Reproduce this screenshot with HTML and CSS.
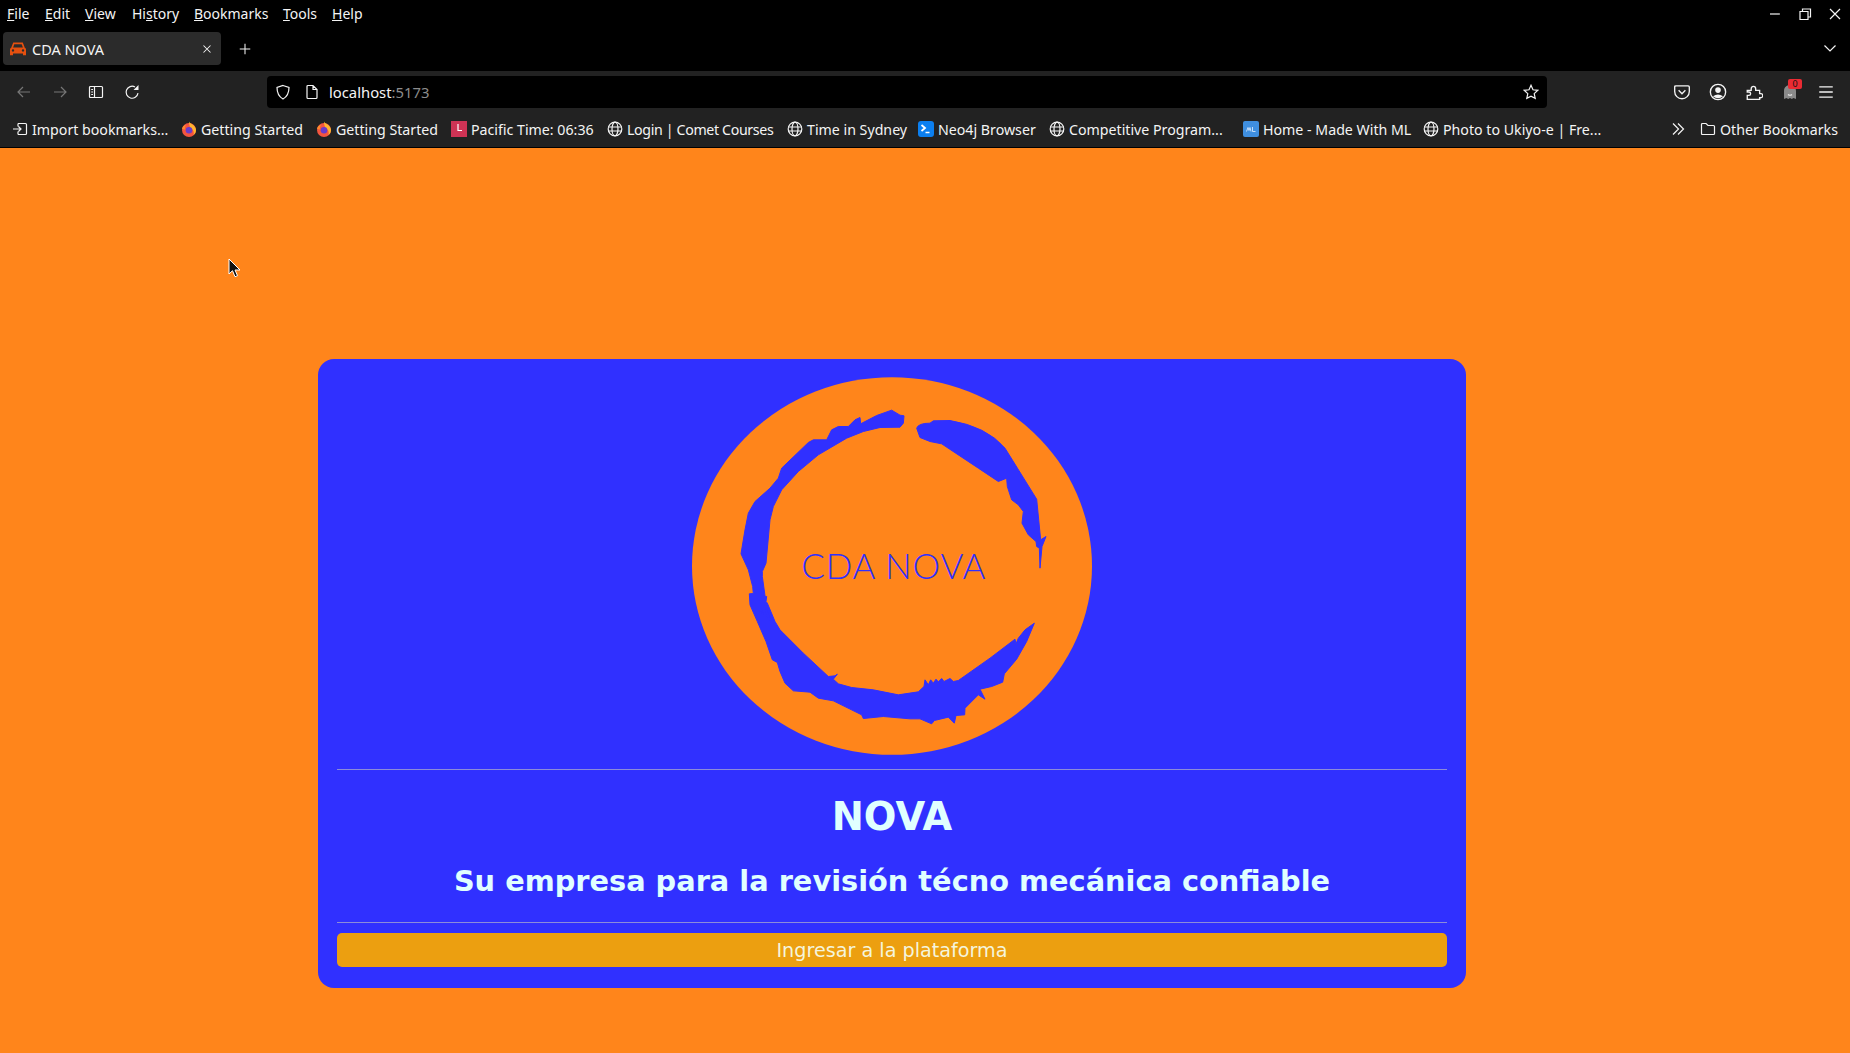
FILE: index.html
```html
<!DOCTYPE html>
<html lang="en">

<head>
  <meta charset="UTF-8">
  <title>CDA NOVA</title>
  <link rel="stylesheet" href="styles.css">
</head>

<body>

  <header class="browser">
    <div class="menubar">
      <nav class="menu">
        <span><u>F</u>ile</span>
        <span><u>E</u>dit</span>
        <span><u>V</u>iew</span>
        <span>Hi<u>s</u>tory</span>
        <span><u>B</u>ookmarks</span>
        <span><u>T</u>ools</span>
        <span><u>H</u>elp</span>
      </nav>
      <div class="window-buttons">
        <svg viewBox="0 0 16 16"><path d="M3 8h10"/></svg>
        <svg viewBox="0 0 16 16"><path d="M3 5.500h8v8H3zM5.500 5.500V3h8v8H11"/></svg>
        <svg viewBox="0 0 16 16"><path d="M3 3l10 10M13 3L3 13"/></svg>
      </div>
    </div>

    <div class="tabbar">
      <div class="tab">
        <svg class="favicon" viewBox="0 0 16 16"><path class="car" d="M3.200 1.500h9.600l2 5.200c.7.3 1.200 1 1.200 1.800v5.800h-3v-1.800H3v1.800H0V8.500c0-.8.5-1.500 1.200-1.800zM4.300 3.200 3.100 6.400h9.800l-1.200-3.200zM3 8.200a1.200 1.200 0 1 0 0 2.400 1.200 1.200 0 0 0 0-2.400zm10 0a1.200 1.200 0 1 0 0 2.400 1.200 1.200 0 0 0 0-2.400z"/></svg>
        <span class="tab-title">CDA NOVA</span>
        <svg class="tab-close" viewBox="0 0 16 16"><path d="M4 4l8 8M12 4l-8 8"/></svg>
      </div>
      <svg class="new-tab" viewBox="0 0 16 16"><path d="M8 2v12M2 8h12"/></svg>
      <svg class="tab-list" viewBox="0 0 16 16"><path d="M2.500 5.500 8 11l5.500-5.500"/></svg>
    </div>

    <div class="navbar">
      <div class="nav-left">
        <svg class="dim" viewBox="0 0 16 16"><path d="M14 8H2M7 3 2 8l5 5"/></svg>
        <svg class="dim" viewBox="0 0 16 16"><path d="M2 8h12M9 3l5 5-5 5"/></svg>
        <svg viewBox="0 0 16 16"><path d="M1.500 3.500q0-1 1-1h11q1 0 1 1v9q0 1-1 1h-11q-1 0-1-1zM6.500 2.500v11M3.200 5.500h1.800M3.200 8h1.800M3.200 10.500h1.800"/></svg>
        <svg viewBox="0 0 16 16"><path d="M14 9.200A6 6 0 1 1 11 3"/><path class="solid" d="M14.500 1v5h-5z"/></svg>
      </div>
      <div class="urlbar">
        <svg class="shield" viewBox="0 0 16 16"><path d="M8 1.500 14 3.500c0 5-1.500 9-6 11.500C3.500 12.500 2 8.500 2 3.500z"/></svg>
        <svg class="page" viewBox="0 0 16 16"><path d="M3 2.500q0-1 1-1h5l4 4v8q0 1-1 1H4q-1 0-1-1zM9 1.500v4h4"/></svg>
        <span class="url">localhost<span class="port">:5173</span></span>
        <svg class="star" viewBox="0 0 16 16"><path d="M8 1.300l2 4.500 4.800.5-3.600 3.300 1 4.800L8 12.100l-4.200 2.300 1-4.800L1.200 6.300 6 5.800z"/></svg>
      </div>
      <div class="nav-right">
        <svg viewBox="0 0 16 16"><path d="M1.500 3.500q0-1 1-1h11q1 0 1 1v4a6.500 6.500 0 0 1-13 0zM5 6.500l3 3 3-3"/></svg>
        <svg viewBox="0 0 16 16"><circle cx="8" cy="8" r="6.800"/><circle class="solid" cx="8" cy="6.300" r="2.500"/><path class="solid" d="M3.500 11.800Q8 8.500 12.500 11.800 8 15.500 3.500 11.800z"/></svg>
        <svg viewBox="0 0 16 16"><path d="M2 6.500h3.500V5a2 2 0 1 1 4 0v1.500H13v3h1a1.800 1.800 0 0 1 0 3.600h-1v1.400H2v-3.500h1.500a1.500 1.500 0 0 0 0-3H2z"/></svg>
        <div class="ghost">
          <svg viewBox="0 0 18 18"><path class="ghost-body" d="M9 2c3.500 0 6 2.500 6 6v8l-2.500-1-1.700 1-1.800-1-1.800 1-1.700-1L3 16V8c0-3.500 2.500-6 6-6z"/><path class="ghost-face" d="M7 11.500q2 1.500 4 0"/></svg>
          <span class="badge">0</span>
        </div>
        <svg viewBox="0 0 16 16"><path d="M2 3.500h12M2 8h12M2 12.500h12"/></svg>
      </div>
    </div>

    <div class="bookmarks">
      <div class="bm"><svg class="line" viewBox="0 0 16 16"><path d="M6 2.500h7.500q1 0 1 1v9q0 1-1 1H6M6 2.500v3M6 13.500v-3M1 8h8M6.500 5.500 9 8l-2.500 2.500"/></svg>Import bookmarks...</div>
      <div class="bm"><svg viewBox="0 0 16 16"><use href="#firefox"/></svg>Getting Started</div>
      <div class="bm"><svg viewBox="0 0 16 16"><use href="#firefox"/></svg>Getting Started</div>
      <div class="bm"><svg viewBox="0 0 16 16"><rect width="16" height="16" fill="#cf3355"/><path d="M7 3v6.500h4" fill="none" stroke="#fff" stroke-width="1.200"/></svg>Pacific Time: 06:36</div>
      <div class="bm bm-tight"><svg class="line" viewBox="0 0 16 16"><use href="#globe"/></svg>Login | Comet Courses</div>
      <div class="bm"><svg class="line" viewBox="0 0 16 16"><use href="#globe"/></svg>Time in Sydney</div>
      <div class="bm"><svg viewBox="0 0 16 16"><rect width="16" height="16" rx="3" fill="#0b7ff0"/><path d="M3.500 4 7 7 3.500 10" fill="none" stroke="#fff" stroke-width="1.800"/><path d="M7.500 11.500h4" stroke="#fff" stroke-width="1.500"/></svg>Neo4j Browser</div>
      <div class="bm"><svg class="line" viewBox="0 0 16 16"><use href="#globe"/></svg>Competitive Program...</div>
      <div class="bm"><svg viewBox="0 0 16 16"><rect width="16" height="16" rx="2" fill="#3f8fe0"/><path d="M3.500 10.500 5 6.500l1 3 1-3 1 4M9.500 6v4.500h3" fill="none" stroke="#d4e6fa" stroke-width=".9"/></svg>Home - Made With ML</div>
      <div class="bm"><svg class="line" viewBox="0 0 16 16"><use href="#globe"/></svg>Photo to Ukiyo-e | Fre...</div>
      <svg class="more line" viewBox="0 0 16 16"><path d="M3 2.500 8.500 8 3 13.500M8 2.500 13.500 8 8 13.500"/></svg>
      <div class="bm"><svg class="line" viewBox="0 0 16 16"><path d="M1.500 3.500q0-1 1-1h3.500l2 2h5.500q1 0 1 1v7q0 1-1 1h-11q-1 0-1-1z"/></svg>Other Bookmarks</div>
    </div>
  </header>

  <svg class="defs" width="0" height="0">
    <symbol id="globe" viewBox="0 0 16 16"><circle cx="8" cy="8" r="6.800"/><ellipse cx="8" cy="8" rx="3" ry="6.800"/><path d="M1.200 6h13.600M1.200 10h13.600"/></symbol>
    <symbol id="firefox" viewBox="0 0 16 16"><circle cx="8" cy="9" r="7" fill="#f4553f"/><path d="M8 .5c1 2.500 6.800 3.500 7 8.500 0 2-1 4-2.500 5 1-3-.5-6-3-7C8.500 5 8 3 8 .5z" fill="#ffb52e"/><path d="M1 8c.5-3 2.500-4 4-4-1 1.500-1.500 3-1 4.500z" fill="#ff8a2e"/><circle cx="8" cy="9.300" r="3.300" fill="#6a3bc9"/></symbol>
  </svg>

  <main class="page-body">
    <section class="card">
      <svg class="logo" viewBox="66 22 1200 1133">
        <ellipse class="logo-disc" cx="666" cy="588.500" rx="600" ry="566.500"/>
        <path class="ink" d="M702 138 690 136 665 121 620 137 572 162 570 143 555 150 535 170 505 170 485 180 470 210 430 210 415 218 335 295 325 325 300 355 255 395 235 430 225 480 213 552 235 600 248 650 250 671 238 672 240 705 262 755 288 815 307 870 322 878 330 905 345 940 370 963 420 967 445 985 490 993 575 1035 580 1046 640 1040 720 1047 750 1047 785 1062 793 1052 835 1042 853 1060 858 1037 884 1035 885 1015 925 975 945 988 930 958 965 950 998 937 1003 912 1040 868 1070 815 1093 760 1065 780 1045 805 1038 822 1035 808 960 865 865 932 850 935 840 926 822 935 815 926 805 936 798 928 790 940 782 930 775 945 765 930 762 950 745 966 685 975 610 960 545 953 505 942 490 928 502 913 495 918 475 920 400 850 330 780 315 755 292 700 288 695 290 680 278 678 273 688 285 678 277 620 277 605 288 580 300 450 310 410 335 360 385 305 445 255 530 205 580 185 630 173 690 172 700 160Z"/>
        <path class="ink" d="M740 175Q745 160 780 160L790 153 840 152Q950 170 1005 235L1100 388 1112 510 1128 500 1116 530 1110 595 1108 535 1100 530 1098 515 1075 495 1056 460 1060 425 1045 405 1025 390 1012 350 1010 325 985 335 925 295 815 222 780 215 750 203Z"/>
        <path class="ink-thin" d="M270 722 277 720 281 737ZM285 720 291 720 303 752 294 750Z"/>
        <text class="logo-text" x="670" y="629" text-anchor="middle" textLength="552">CDA NOVA</text>
      </svg>
      <hr class="rule">
      <h1>NOVA</h1>
      <h2>Su empresa para la revisión técno mecánica confiable</h2>
      <hr class="rule rule-low">
      <button class="enter">Ingresar a la plataforma</button>
    </section>
    <svg class="cursor" viewBox="0 0 14 20"><path d="M1 1v15l3.500-3.300 2.500 6 2.500-1-2.500-5.700H12z"/></svg>
  </main>

</body>
</html>
```

FILE: styles.css
```css
* { box-sizing: border-box; }
body { margin: 0; height: 1053px; overflow: hidden; background: #ff851b; font-family: "DejaVu Sans", sans-serif; }

/* browser chrome */
.browser { font-family: "Noto Sans", sans-serif; font-size: 14px; color: #f4f4f4; background: #000; }
.browser svg { fill: none; stroke: currentColor; stroke-width: 1.200; flex: none; }
.browser .solid { fill: currentColor; stroke: none; }
.menubar { height: 32px; padding-bottom: 5px; display: flex; align-items: center; justify-content: space-between; }
.menu { display: grid; grid-template-columns: 38px 40px 47px 62px 89px 49px 40px; padding-left: 7px; white-space: nowrap; }
.window-buttons { display: flex; gap: 14px; padding-right: 7px; }
.window-buttons svg { width: 16px; height: 16px; }

.tabbar { height: 39px; display: flex; align-items: flex-start; padding-left: 3px; }
.tab { width: 218px; height: 33px; background: #2b2b2b; border-radius: 4px; display: flex; align-items: center; padding: 0 7px; }
.browser .favicon { width: 16px; height: 16px; fill: #e5500f; stroke: none; }
.tab-title { margin: 0 0 0 6px; flex: 1; font-size: 14.500px; }
.tab .tab-close { width: 14px; height: 14px; }
.new-tab { width: 14px; height: 14px; margin: 10px 0 0 17px; }
.tab-list { width: 16px; height: 16px; margin: 8px 12px 0 auto; }

.navbar { height: 39px; background: #222; display: flex; align-items: center; padding: 5px 0 2px; }
.navbar svg { width: 16px; height: 16px; }
.nav-left { width: 267px; display: flex; gap: 20px; padding-left: 16px; }
.nav-left .dim { opacity: .4; }
.urlbar { width: 1280px; height: 32px; background: #000; border-radius: 4px; display: flex; align-items: center; padding: 0 8px 0 8px; }
.urlbar .page { margin-left: 13px; }
.url { margin-left: 9px; flex: 1; font-size: 14.800px; }
.port { color: #8c8c8c; }
.nav-right { flex: 1; display: flex; justify-content: flex-end; align-items: center; gap: 18px; padding-right: 15px; }
.navbar .nav-right svg { width: 18px; height: 18px; }
.ghost { position: relative; width: 18px; height: 18px; }
.browser .ghost-body { fill: #8a8a8a; stroke: none; }
.browser .ghost-face { stroke: #e8e8e8; }
.badge { position: absolute; top: -4px; left: 7px; width: 14px; height: 10px; background: #ea2b33; border-radius: 2px; color: #111; font-size: 9px; line-height: 10px; text-align: center; }

.bookmarks { height: 38px; padding: 1px 0 0 12px; background: #222; border-bottom: 1px solid #000; display: grid; grid-template-columns: 169px 135px 135px 156px 180px 131px 131px 194px 180px 247px 30px auto; align-items: center; white-space: nowrap; font-size: 14.200px; }
.bm { display: flex; align-items: center; gap: 4px; overflow: hidden; }
.bm-tight { letter-spacing: -.35px; }
.bookmarks svg { width: 16px; height: 16px; }
.bookmarks svg:not(.line) { stroke: none; }
.defs { position: absolute; }

/* page */
.page-body { position: relative; height: 905px; padding-top: 211px; }
.card { width: 1148px; height: 629px; margin-left: 318px; padding: 18px 19px 20px; background: #3030ff; border-radius: 16px; display: flex; flex-direction: column; align-items: center; color: #e0ffff; }
.logo { width: 400px; height: 378px; flex: none; }
.logo-disc { fill: #ff851b; }
.ink { fill: #3030ff; stroke: #3030ff; stroke-width: 3; stroke-linejoin: round; }
.ink-thin { fill: #3030ff; }
.logo-text { fill: #3030ff; font-family: "Lato", sans-serif; font-weight: 300; font-size: 105px; }
.rule { width: 100%; height: 1px; margin: 14px 0 0; border: 0; background: #8c8cd9; flex: none; }
h1 { margin: 25px 0 0; font-size: 38.400px; line-height: 44px; font-weight: 700; flex: none; }
h2 { margin: 25px 0 0; font-size: 28.800px; line-height: 34px; font-weight: 700; flex: none; }
.rule-low { margin-top: 24px; }
.enter { width: 100%; height: 34px; margin-top: 10px; flex: none; background: #ec9f10; color: #f5f5dc; border: 0; border-radius: 5px; font-family: inherit; font-size: 19.200px; padding: 0; }
.cursor { position: absolute; left: 228px; top: 110px; width: 14px; height: 20px; fill: #111; stroke: #fff; stroke-width: 1; }
```
